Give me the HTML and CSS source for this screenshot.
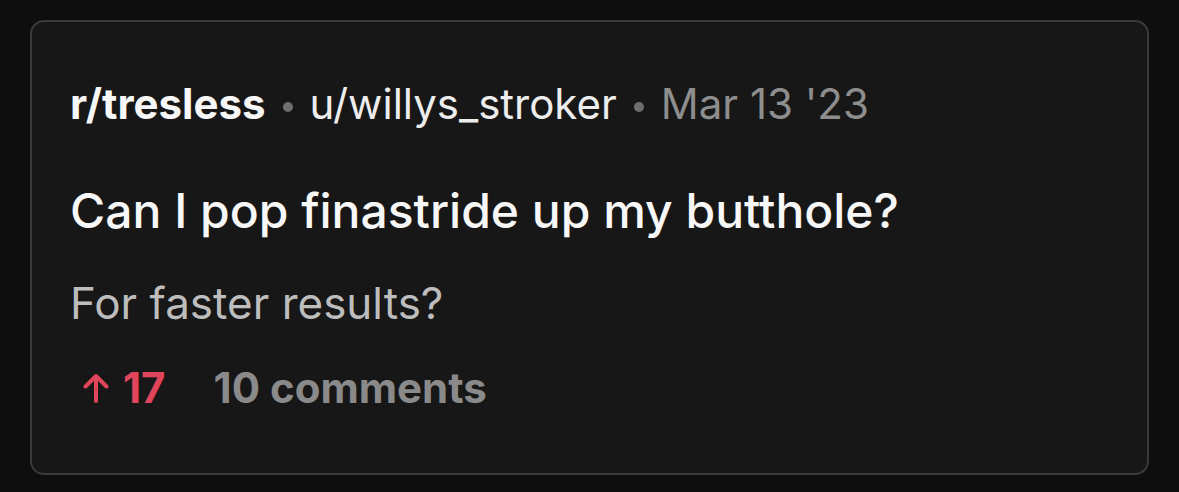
FILE: index.html
```html
<!DOCTYPE html>
<html>
<head>
<meta charset="utf-8">
<link rel="stylesheet" href="styles.css">
</head>
<body>
<div class="card">
  <div class="meta">
    <span class="sub">r/tresless</span>
    <span class="dot"></span>
    <span class="user">u/willys_stroker</span>
    <span class="dot"></span>
    <span class="date">Mar 13 '23</span>
  </div>
  <h1 class="title">Can I pop finastride up my butthole?</h1>
  <p class="body">For faster results?</p>
  <div class="stats">
    <span class="votes">
      <svg class="arrow" viewBox="0 0 26 30" width="26" height="30"><path d="M13 28V3M2.5 13.5L13 3L23.5 13.5" fill="none" stroke="currentColor" stroke-width="4" stroke-linecap="round" stroke-linejoin="round"/></svg>
      <span>17</span>
    </span>
    <span class="comments">10 comments</span>
  </div>
</div>
</body>
</html>
```
FILE: styles.css
```css
html, body {
  margin: 0;
  background: #0e0e0e;
}
body {
  padding: 20px 30px 17px 30px;
  font-family: Inter, "Noto Sans", sans-serif;
}
.card {
  box-sizing: border-box;
  height: 455px;
  border: 2px solid #3a3a3a;
  border-radius: 14px;
  background: #171717;
  padding: 56px 38px 0 38px;
}
.meta {
  display: flex;
  align-items: baseline;
  gap: 17px;
  font-size: 42px;
  line-height: 52px;
  color: #ededed;
}
.sub {
  font-weight: 700;
  color: #f7f7f7;
}
.dot {
  align-self: center;
  width: 10px;
  height: 10px;
  border-radius: 50%;
  background: #6e6e6e;
  margin-top: 6px;
}
.date {
  color: #8e8e8e;
}
.title {
  margin: 52px 0 0 0;
  font-size: 48px;
  line-height: 58px;
  font-weight: 500;
  color: #f7f7f7;
}
.body {
  margin: 36px 0 0 0;
  font-size: 44px;
  line-height: 54px;
  color: #bdbdbd;
}
.stats {
  margin-top: 32px;
  display: flex;
  align-items: center;
  gap: 48px;
  font-size: 42px;
  line-height: 52px;
  font-weight: 700;
}
.votes {
  display: flex;
  align-items: center;
  gap: 14px;
  color: #e0455b;
  padding-left: 13px;
}
.arrow {
  display: block;
}
.comments {
  color: #8a8a8a;
}
```
